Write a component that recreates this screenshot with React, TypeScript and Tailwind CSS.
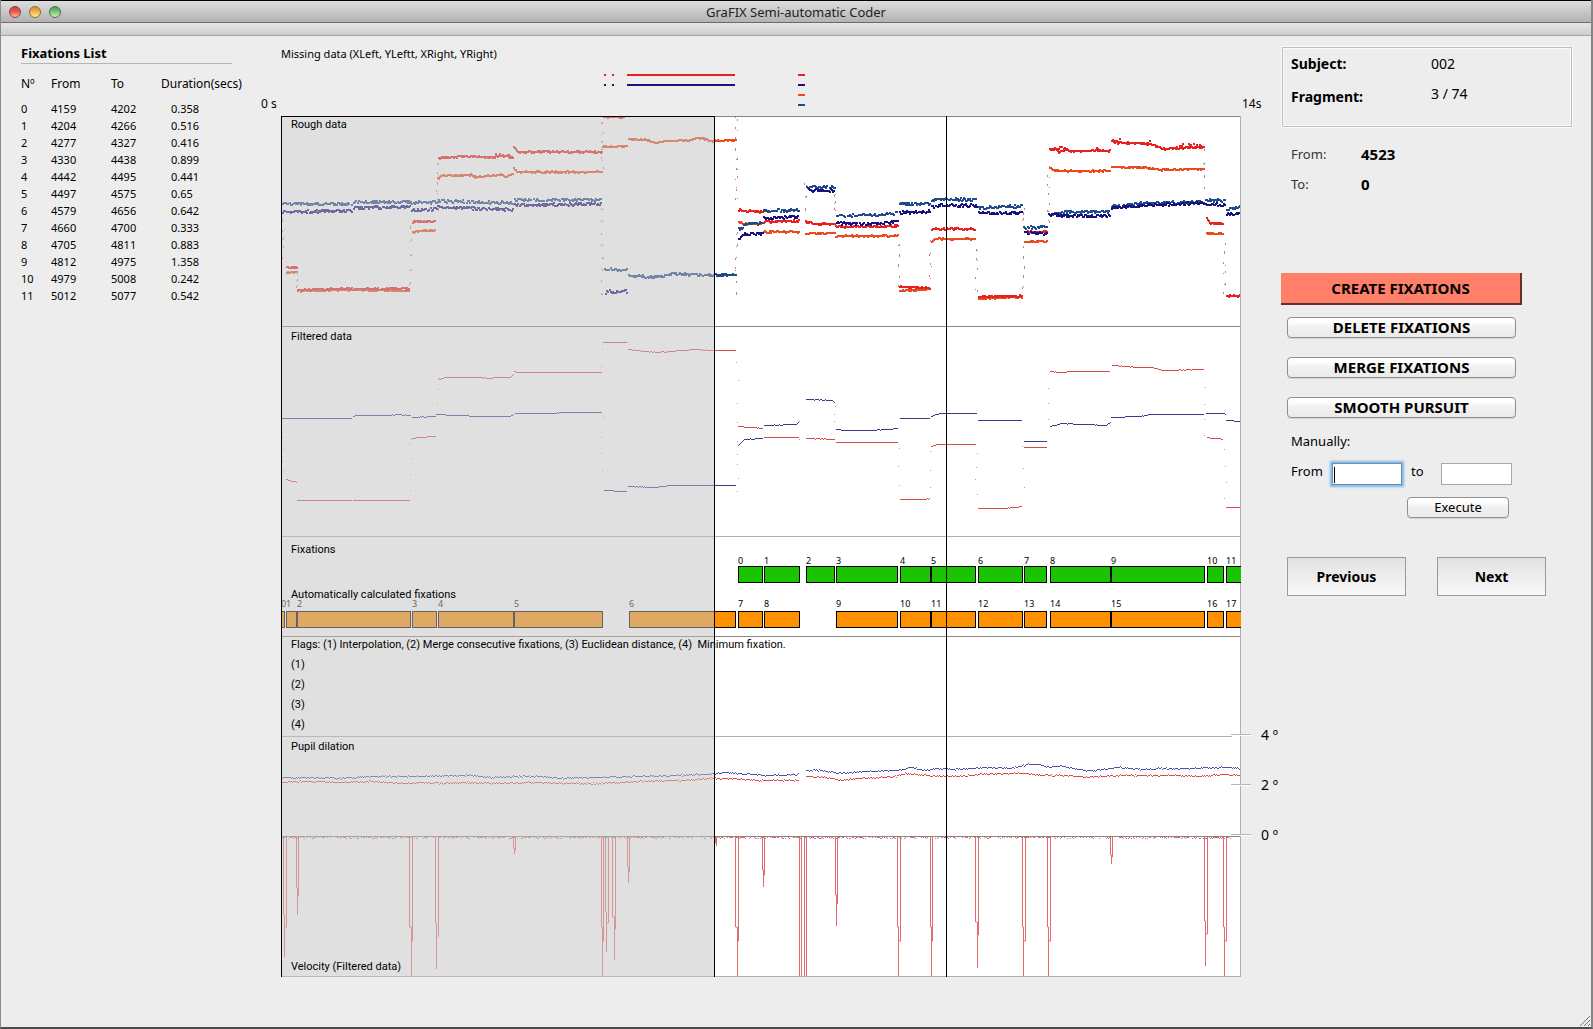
import { useId } from "react";

const CHART_LEFT = 281;
const CHART_TOP = 116;
const CHART_WIDTH = 960;
const CHART_HEIGHT = 861;

const RED = "#e8201f";
const ORANGE = "#ea4a20";
const STEEL = "#214a88";
const NAVY = "#17127f";

type Run = number[];

function createRandom(seed: number) {
  let state = seed;
  return () => {
    state = (state * 1664525 + 1013904223) % 4294967296;
    return state / 4294967296;
  };
}

/* Turns runs of x,y pairs into a path of small dots, one for each sample. */
function dotted(runs: Run[], jitter: number, size: number, seed: number, skip = 0) {
  const random = createRandom(seed);
  let path = "";
  for (const run of runs) {
    for (let i = 0; i + 3 < run.length; i += 2) {
      const [x0, y0, x1, y1] = run.slice(i, i + 4);
      for (let x = x0; x < x1; x += 1) {
        if (random() < skip) continue;
        const y = y0 + ((y1 - y0) * (x - x0)) / (x1 - x0) + (random() * 2 - 1) * jitter;
        path += `M${x} ${Math.round(y)}h${size}`;
      }
    }
  }
  return path;
}

/* Sparse samples taken while the eye moves: [x, from, to, step]. */
function falling(jumps: number[][], size: number, seed: number) {
  const random = createRandom(seed);
  let path = "";
  for (const [x, from, to, step] of jumps) {
    for (let y = from; y <= to; y += step) {
      path += `M${x + Math.round(random() * 2 - 1)} ${Math.round(y + random() * 3)}h${size}`;
    }
  }
  return path;
}

const rough = {
  steel: [
    [282, 204, 352, 204],
    [353, 202, 411, 202],
    [411, 203, 437, 202],
    [437, 201, 513, 203],
    [514, 200, 601, 200],
    [603, 269, 627, 270],
    [628, 275, 650, 277, 675, 274, 700, 275, 736, 275],
    [738, 229, 743, 227],
    [743, 224, 763, 223],
    [763, 211, 799, 210],
    [806, 187, 831, 187, 835, 190],
    [836, 216, 870, 215, 898, 213],
    [899, 204, 930, 204],
    [931, 202, 938, 199, 977, 200],
    [978, 208, 1022, 206],
    [1023, 228, 1047, 227],
    [1048, 215, 1065, 212, 1110, 212],
    [1111, 206, 1150, 203, 1204, 202],
    [1205, 200, 1225, 201],
    [1226, 209, 1240, 207],
  ],
  navy: [
    [282, 212, 352, 211],
    [353, 208, 411, 207],
    [411, 210, 437, 209],
    [437, 207, 480, 209, 513, 210],
    [514, 205, 601, 204],
    [605, 293, 609, 291, 613, 293, 618, 291, 627, 292],
    [738, 240, 744, 234, 763, 233],
    [763, 218, 799, 217],
    [806, 190, 835, 191],
    [836, 223, 870, 224, 898, 222],
    [899, 213, 930, 211],
    [931, 207, 940, 205, 977, 206],
    [978, 213, 1022, 213],
    [1024, 233, 1047, 234],
    [1048, 215, 1080, 216, 1110, 216],
    [1111, 208, 1150, 205, 1204, 203],
    [1205, 204, 1225, 205],
    [1226, 214, 1240, 214],
  ],
  red: [
    [286, 267, 297, 268],
    [297, 290, 352, 288],
    [353, 289, 409, 289],
    [412, 222, 435, 221],
    [438, 158, 470, 156, 490, 158, 500, 156, 513, 157],
    [513, 147, 517, 152, 602, 152],
    [603, 117, 626, 117],
    [738, 210, 745, 211, 763, 212],
    [763, 222, 799, 221],
    [805, 222, 815, 224, 835, 224],
    [835, 227, 898, 226],
    [899, 287, 930, 288],
    [931, 229, 975, 229],
    [978, 297, 1022, 296],
    [1024, 232, 1047, 232],
    [1049, 150, 1054, 149, 1058, 152, 1064, 149, 1070, 151, 1110, 151],
    [1111, 141, 1125, 143, 1150, 144, 1162, 149, 1180, 148, 1204, 147],
    [1206, 219, 1210, 223, 1223, 224],
    [1226, 296, 1240, 296],
  ],
  redScatter: [
    [1050, 149, 1070, 149],
    [1095, 149, 1100, 148],
    [1111, 142, 1122, 141],
    [1145, 143, 1152, 143],
    [1176, 146, 1204, 146],
    [490, 156, 513, 156],
  ],
  orange: [
    [286, 273, 297, 272],
    [297, 291, 352, 290],
    [353, 290, 409, 291],
    [412, 232, 420, 231, 435, 230],
    [437, 179, 440, 176, 470, 175, 475, 177, 500, 175, 505, 177, 513, 174],
    [513, 169, 517, 172, 602, 172],
    [602, 147, 627, 146],
    [628, 139, 645, 140, 655, 143, 665, 141, 690, 140, 700, 138, 710, 141, 736, 140],
    [738, 222, 745, 224, 763, 223],
    [763, 232, 799, 232],
    [805, 234, 835, 233],
    [835, 236, 898, 236],
    [899, 291, 930, 289],
    [931, 242, 934, 239, 975, 239],
    [978, 299, 990, 298, 1022, 297],
    [1024, 242, 1047, 241],
    [1049, 168, 1056, 171, 1110, 171],
    [1111, 167, 1150, 168, 1160, 170, 1204, 169],
    [1206, 233, 1223, 234],
  ],
};

const roughJumps = [
  [283, 219, 262, 9],
  [297, 272, 286, 6],
  [410, 226, 288, 14],
  [437, 163, 215, 9],
  [602, 122, 168, 9],
  [602, 208, 292, 12],
  [736, 117, 205, 10],
  [736, 232, 292, 12],
  [805, 184, 220, 12],
  [835, 194, 214, 7],
  [899, 244, 284, 10],
  [930, 240, 285, 12],
  [976, 248, 292, 10],
  [1023, 246, 290, 10],
  [1048, 166, 222, 9],
  [1204, 150, 190, 12],
  [1224, 242, 295, 10],
  [1023, 208, 222, 5],
];

const filteredRed: Run[] = [
  [286, 479, 297, 482],
  [297, 500, 352, 500],
  [353, 500, 410, 500],
  [411, 439, 416, 437, 436, 436],
  [438, 379, 445, 377, 480, 377, 488, 378, 500, 377, 510, 377, 514, 373],
  [514, 371, 518, 372, 602, 372],
  [603, 342, 627, 342],
  [628, 349, 645, 351, 658, 352, 670, 351, 695, 349, 710, 350, 736, 350],
  [738, 426, 763, 428],
  [764, 437, 799, 437],
  [806, 438, 835, 439],
  [836, 442, 898, 442],
  [900, 499, 925, 499, 930, 498],
  [931, 446, 938, 444, 976, 444],
  [978, 508, 1005, 508, 1022, 506],
  [1024, 447, 1047, 447],
  [1050, 371, 1060, 372, 1070, 371, 1110, 371],
  [1112, 365, 1140, 367, 1152, 367, 1162, 370, 1204, 369],
  [1207, 437, 1223, 439],
  [1226, 507, 1240, 507],
];

const filteredBlue: Run[] = [
  [282, 418, 352, 418],
  [353, 416, 356, 415, 390, 415, 396, 414, 411, 415],
  [412, 417, 436, 416],
  [436, 414, 460, 415, 475, 416, 510, 416, 514, 413],
  [515, 413, 555, 413, 560, 412, 602, 412],
  [604, 490, 611, 490, 615, 491, 627, 491],
  [628, 486, 655, 487, 670, 485, 736, 485],
  [738, 445, 744, 439, 763, 438],
  [764, 425, 796, 424, 799, 421],
  [806, 399, 832, 400, 835, 402],
  [836, 429, 845, 430, 870, 430, 898, 428],
  [900, 418, 930, 418],
  [931, 416, 940, 413, 977, 413],
  [978, 420, 1022, 420],
  [1024, 441, 1047, 441],
  [1050, 426, 1062, 423, 1105, 425, 1111, 422],
  [1111, 417, 1140, 416, 1150, 414, 1204, 414],
  [1206, 413, 1223, 413, 1226, 415],
  [1226, 420, 1240, 421],
];

const filteredJumps = [
  [283, 434, 476, 12],
  [410, 440, 496, 16],
  [437, 388, 410, 12],
  [602, 348, 370, 16],
  [602, 416, 480, 18],
  [737, 360, 420, 20],
  [737, 440, 488, 12],
  [799, 420, 445, 16],
  [835, 405, 425, 8],
  [899, 446, 496, 18],
  [930, 450, 496, 18],
  [976, 450, 500, 14],
  [1023, 446, 500, 20],
  [1048, 386, 424, 16],
  [1204, 386, 434, 16],
  [1225, 448, 500, 16],
];

const pupilBlue: Run[] = [
  [282, 777, 340, 778, 370, 776, 410, 776, 470, 775, 490, 777, 510, 776, 540, 776, 560, 778, 600, 777, 630, 776, 680, 775, 714, 773, 723, 772, 765, 775, 799, 774],
  [806, 770, 820, 770, 842, 773, 860, 771, 896, 770, 912, 767, 925, 770, 938, 768, 955, 769, 985, 767, 1010, 768, 1028, 764, 1040, 764, 1048, 767, 1058, 765, 1072, 768, 1085, 770, 1095, 770, 1120, 767, 1140, 769, 1160, 768, 1190, 768, 1225, 767, 1240, 768],
];

const pupilRed: Run[] = [
  [282, 782, 300, 781, 340, 782, 370, 781, 400, 783, 420, 782, 440, 783, 470, 782, 490, 783, 530, 782, 560, 783, 600, 783, 640, 781, 680, 780, 714, 778, 725, 778, 740, 779, 760, 780, 799, 780],
  [806, 776, 825, 777, 842, 780, 860, 778, 896, 776, 905, 773, 925, 775, 955, 776, 980, 774, 1000, 773, 1022, 773, 1050, 775, 1070, 775, 1085, 777, 1100, 776, 1120, 775, 1180, 775, 1200, 776, 1225, 774, 1240, 775],
];

/* Saccade peaks: [left, tip, right, depth]. */
const peaks = [
  [283, 284, 286, 957],
  [296, 297, 298, 915],
  [409, 411, 412, 976],
  [435, 436, 438, 969],
  [513, 514, 515, 854],
  [601, 602, 603, 976],
  [605, 606, 608, 952],
  [612, 614, 615, 960],
  [627, 628, 629, 883],
  [715, 716, 716, 846],
  [735, 737, 738, 976],
  [762, 763, 764, 887],
  [835, 836, 837, 926],
  [897, 898, 900, 976],
  [930, 931, 932, 976],
  [975, 977, 978, 968],
  [1022, 1023, 1025, 976],
  [1047, 1048, 1050, 976],
  [1110, 1111, 1112, 864],
  [1204, 1205, 1207, 966],
  [1223, 1224, 1226, 976],
];

function peakPath() {
  return (
    peaks
      .map(
        ([l, t, r, d]) =>
          `M${l} 837V${Math.round(837 + (d - 837) * 0.65)}H${t}V${d}M${r} 837V${Math.round(837 + (d - 837) * 0.75)}H${t}`,
      )
      .join("") + "M799 837V976M801 837V976M804 837V976M806 837V976"
  );
}

function Plot() {
  const clip = useId();
  return (
    <svg
      className="absolute inset-0 h-full w-full"
      viewBox={`${CHART_LEFT} ${CHART_TOP} ${CHART_WIDTH} ${CHART_HEIGHT}`}
      preserveAspectRatio="none"
      fill="none"
      aria-hidden="true"
    >
      <clipPath id={clip}>
        <rect x={281} y={116} width={960} height={861} />
      </clipPath>
      <g clipPath={`url(#${clip})`}>
        <g strokeWidth={2} shapeRendering="crispEdges">
          <path d={falling(roughJumps, 1, 5)} stroke="#d8718c" />
          <path d={falling(roughJumps, 1, 19)} stroke="#9b8f9f" strokeWidth={1} />
          <path d={dotted(rough.orange, 0.7, 2, 11)} stroke={ORANGE} />
          <path d={dotted(rough.red, 0.8, 2, 23)} stroke={RED} />
          <path d={dotted(rough.redScatter, 2.5, 2, 29, 0.5)} stroke={RED} />
          <path d={dotted(rough.steel, 1.4, 2, 37, 0.1)} stroke={STEEL} />
          <path d={dotted(rough.navy, 1.4, 2, 41, 0.1)} stroke={NAVY} />
        </g>
        <g strokeWidth={1} transform="translate(0 0.5)" shapeRendering="crispEdges">
          <path d={falling(filteredJumps, 1, 7)} stroke="#a9a0a8" />
          <path d={dotted(filteredRed, 0.3, 1, 3)} stroke="#d8494d" />
          <path d={dotted(filteredBlue, 0.3, 1, 9)} stroke="#3d3a8c" />
          <path d={dotted(pupilBlue, 0.7, 1, 51)} stroke="#4a4fa8" />
          <path d={dotted(pupilRed, 0.7, 1, 57)} stroke="#e0484c" />
        </g>
        <path d={dotted([[282, 837, 1232, 837]], 1, 1, 71, 0.25)} stroke="#dd6a70" shapeRendering="crispEdges" />
        <path d={peakPath()} stroke="#e56a70" strokeWidth={1} transform="translate(0.5 0)" />
      </g>
      <path d="M281 116.5H1241M281 326.5H1241M281 636.5H1241M281 836.5H1241" stroke="#858585" />
      <path d="M281 536.5H1241M281 736.5H1232M281 976.5H1241M1240.5 116V977" stroke="#b0b0b0" />
    </svg>
  );
}

const manualBoxes: [number, number][] = [
  [738, 763],
  [764, 800],
  [806, 835],
  [836, 898],
  [900, 931],
  [931, 976],
  [978, 1023],
  [1024, 1047],
  [1050, 1111],
  [1111, 1205],
  [1207, 1224],
  [1226, 1245],
];

const automaticBoxes: [number, number][] = [
  [278, 285],
  [286, 297],
  [297, 411],
  [412, 437],
  [438, 514],
  [514, 603],
  [629, 736],
  ...manualBoxes.filter((_, index) => index !== 2),
];

function percent(value: number) {
  return `${(value / CHART_WIDTH) * 100}%`;
}

function BoxTrack({
  boxes,
  color,
  labelGap,
  className,
}: {
  boxes: [number, number][];
  color: string;
  labelGap: string;
  className: string;
}) {
  return (
    <div className={`absolute inset-x-0 h-9 overflow-hidden ${className}`}>
      {boxes.map(([from, to], index) => (
        <div
          key={from}
          className="absolute top-1"
          style={{ left: percent(from - CHART_LEFT), width: percent(to - from) }}
        >
          <span className={`block h-[10px] text-[9px] leading-[10px] text-black ${labelGap}`}>
            <span className={from < CHART_LEFT ? "pl-[3px]" : ""}>{index}</span>
          </span>
          <div className={`h-[17px] border border-black ${color}`} />
        </div>
      ))}
    </div>
  );
}

const rows = [
  ["4159", "4202", "0.358"],
  ["4204", "4266", "0.516"],
  ["4277", "4327", "0.416"],
  ["4330", "4438", "0.899"],
  ["4442", "4495", "0.441"],
  ["4497", "4575", "0.65"],
  ["4579", "4656", "0.642"],
  ["4660", "4700", "0.333"],
  ["4705", "4811", "0.883"],
  ["4812", "4975", "1.358"],
  ["4979", "5008", "0.242"],
  ["5012", "5077", "0.542"],
];

function TitleBar() {
  const lights = [
    "from-[#c2453f] via-[#ee5a56] to-[#ffb3a8] border-[#84433f]",
    "from-[#cf8a2c] via-[#f5b548] to-[#ffe9a4] border-[#8b6a35]",
    "from-[#4f9a4f] via-[#7dc77a] to-[#d0f3c4] border-[#4a7049]",
  ];
  const names = ["Close", "Minimize", "Zoom"];
  return (
    <header>
      <div className="flex h-[23px] items-center border-t border-b border-t-black border-b-[#6b6b6b] bg-linear-to-b from-[#dedede] to-[#b2b2b2]">
        <div className="flex w-[100px] gap-2 pl-2">
          {lights.map((light, index) => (
            <button
              key={light}
              type="button"
              aria-label={names[index]}
              className={`size-3 rounded-full border bg-linear-to-b ${light}`}
            />
          ))}
        </div>
        <h1 className="flex-1 text-center text-[13px] leading-5 text-[#222]">GraFIX Semi-automatic Coder</h1>
        <div className="w-[100px]" />
      </div>
      <div className="h-[13px] border-b border-[#a3a3a3] bg-linear-to-b from-[#e6e6e6] to-[#cdcdcd]" />
    </header>
  );
}

function FixationsList() {
  return (
    <aside className="pt-[7px] pl-5">
      <h2 className="mr-[49px] border-b border-[#b5b5b5] text-[13px] leading-5 font-bold">Fixations List</h2>
      <table className="mt-[10px] w-[230px] table-fixed text-left text-[11px]">
        <thead className="text-[12px]">
          <tr className="h-5 leading-5">
            <th className="w-[30px] font-normal">Nº</th>
            <th className="w-[60px] font-normal">From</th>
            <th className="w-[50px] font-normal">To</th>
            <th className="font-normal">Duration(secs)</th>
          </tr>
          <tr className="h-[6px]" />
        </thead>
        <tbody>
          {rows.map(([from, to, duration], index) => (
            <tr key={from} className="h-[17px] leading-[17px]">
              <td>{index}</td>
              <td>{from}</td>
              <td>{to}</td>
              <td className="pl-[10px]">{duration}</td>
            </tr>
          ))}
        </tbody>
      </table>
    </aside>
  );
}

function MissingData() {
  return (
    <div className="relative h-[80px] pt-[10px] text-[11px] leading-4">
      <h2>Missing data (XLeft, YLeftt, XRight, YRight)</h2>
      <svg
        className="absolute inset-0 h-full w-full"
        viewBox="281 36 960 80"
        preserveAspectRatio="none"
        strokeWidth={2}
        aria-hidden="true"
      >
        <path d="M604 75h2M612 75h2M627 75h108M798 75h7" stroke={RED} />
        <path d="M604 85h2M612 85h2M627 85h108M798 85h7" stroke={NAVY} />
        <path d="M798 95h7" stroke={ORANGE} />
        <path d="M798 105h7" stroke={STEEL} />
      </svg>
      <span className="absolute bottom-1 -left-5 text-[12px]">0 s</span>
      <span className="absolute bottom-1 left-full pl-px text-[12px]">14s</span>
    </div>
  );
}

function DegreeTick({ label, className }: { label: string; className: string }) {
  return (
    <div className={`absolute left-full -ml-[10px] flex h-4 items-center gap-[10px] ${className}`}>
      <span className="h-[2px] w-5 border-t border-[#b5b5b5] bg-white" />
      <span className="text-[14px] leading-4 whitespace-nowrap">{label}</span>
    </div>
  );
}

function ChartPanels() {
  return (
    <div className="relative bg-white text-[11px] leading-4">
      <Plot />
      <BoxTrack boxes={manualBoxes} color="bg-[#1bc400]" labelGap="mb-0" className="top-[436px]" />
      <BoxTrack boxes={automaticBoxes} color="bg-[#ff9000]" labelGap="mb-[2px]" className="top-[479px]" />
      <div className="absolute inset-y-0 left-0 w-[45.2%] border-x border-t border-black bg-[rgba(195,195,195,0.51)] bg-clip-padding" />
      <div className="absolute inset-y-0 left-[69.3%] w-px bg-black" />
      <div className="relative pt-px font-['Roboto','Noto_Sans',sans-serif]">
        <section className="h-[210px] px-[10px]">
          <h3>Rough data</h3>
        </section>
        <section className="h-[210px] px-[10px] pt-[2px]">
          <h3>Filtered data</h3>
        </section>
        <section className="flex h-[100px] flex-col gap-[33px] px-[10px] pt-[7px] leading-3">
          <h3>Fixations</h3>
          <h3>Automatically calculated fixations</h3>
        </section>
        <section className="h-[100px] px-[10px]">
          <h3 className="whitespace-pre">
            Flags: (1) Interpolation, (2) Merge consecutive fixations, (3) Euclidean distance, (4)  Minimum fixation.
          </h3>
          <ol className="mt-[2px] leading-5">
            <li>(1)</li>
            <li>(2)</li>
            <li>(3)</li>
            <li>(4)</li>
          </ol>
        </section>
        <section className="h-[100px] px-[10px] pt-[2px]">
          <h3>Pupil dilation</h3>
        </section>
        <section className="flex h-[140px] items-end px-[10px] pb-[2px]">
          <h3>Velocity (Filtered data)</h3>
        </section>
      </div>
      <DegreeTick label="4 º" className="top-[611px]" />
      <DegreeTick label="2 º" className="top-[661px]" />
      <DegreeTick label="0 º" className="top-[711px]" />
    </div>
  );
}

const aquaButton =
  "block rounded-[4px] border border-[#8f8f8f] bg-linear-to-b from-white from-20% via-[#f0f0f0] via-50% to-[#ebebeb] text-center shadow-[0_1px_0_#d5d5d5]";
const squareButton =
  "h-[39px] border border-[#9a9a9a] bg-linear-to-b from-[#e2e2e2] to-[#f8f8f8] text-[14px] font-bold";

function ControlPanel() {
  return (
    <aside className="pt-[11px] pl-10 text-[13px] leading-[18px]">
      <dl className="mr-[19px] ml-px grid h-[80px] grid-cols-[140px_1fr] content-start border border-[#bdbdbd] pl-[8px] text-[14px] shadow-[inset_0_0_0_1px_#fafafa,0_0_0_1px_#fafafa]">
        <dt className="pt-[7px] font-bold">Subject:</dt>
        <dd className="pt-[7px]">002</dd>
        <dt className="pt-[15px] font-bold">Fragment:</dt>
        <dd className="pt-[12px]">3 / 74</dd>
      </dl>
      <dl className="mt-[18px] ml-[10px] grid grid-cols-[70px_1fr] gap-y-3">
        <dt className="text-[#333]">From:</dt>
        <dd className="text-[15px] font-bold">4523</dd>
        <dt className="text-[#333]">To:</dt>
        <dd className="text-[15px] font-bold">0</dd>
      </dl>
      <div className="mt-[80px] w-[241px]">
        <button
          type="button"
          className="block h-8 w-full border-r-2 border-b-2 border-[#63302a] bg-[#ff7f68] text-[15px] font-bold"
        >
          CREATE FIXATIONS
        </button>
        <div className="mt-3 flex flex-col gap-[19px] px-[6px]">
          {["DELETE FIXATIONS", "MERGE FIXATIONS", "SMOOTH PURSUIT"].map((label) => (
            <button key={label} type="button" className={`${aquaButton} h-[21px] pb-[2px] text-[15px] leading-4 font-bold`}>
              {label}
            </button>
          ))}
        </div>
      </div>
      <form className="mt-[14px] ml-[10px]">
        <p>Manually:</p>
        <div className="mt-[13px] flex h-[22px] leading-4">
          <label htmlFor="manual-from" className="w-[41px]">
            From
          </label>
          <div className="relative h-[22px] w-[70px]">
            <input
              id="manual-from"
              className="h-[22px] w-[70px] border border-[#5f93bd] bg-white shadow-[0_0_2px_2px_#86b8e2] outline-none"
            />
            <span className="absolute top-[4px] left-[2px] h-4 w-px bg-black" />
          </div>
          <label htmlFor="manual-to" className="w-[39px] pl-[9px]">
            to
          </label>
          <input id="manual-to" className="h-[22px] w-[71px] border border-[#a8a8a8] bg-white outline-none" />
        </div>
        <button type="button" className={`${aquaButton} mt-3 ml-[116px] h-[21px] w-[102px] pb-[2px] leading-4`}>
          Execute
        </button>
      </form>
      <div className="mt-[39px] ml-[6px] flex gap-[31px]">
        <button type="button" className={`${squareButton} w-[119px]`}>
          Previous
        </button>
        <button type="button" className={`${squareButton} w-[109px]`}>
          Next
        </button>
      </div>
    </aside>
  );
}

export default function App() {
  return (
    <div className="flex min-h-screen flex-col border-r-2 border-b-2 border-l border-r-[#858585] border-b-[#4c4a4c] border-l-[#8a8a8a] bg-[#ededed] font-['Noto_Sans','Open_Sans',sans-serif] text-black">
      <TitleBar />
      <div className="grid flex-1 grid-cols-[280px_minmax(0,1fr)_350px]">
        <FixationsList />
        <main>
          <MissingData />
          <ChartPanels />
        </main>
        <ControlPanel />
      </div>
      <svg className="-mt-3 size-3 self-end" viewBox="0 0 12 12" stroke="#777" fill="none" aria-hidden="true">
        <path d="M1 11L11 1M5 11L11 5M9 11L11 9" />
      </svg>
    </div>
  );
}
